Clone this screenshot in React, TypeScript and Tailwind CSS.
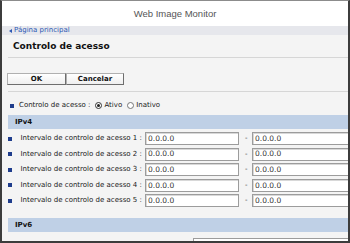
import React from 'react';

const ranges = [1, 2, 3, 4, 5];

function Bullet({ className = '' }: { className?: string }) {
  return <span className={`block w-[4px] h-[4px] bg-[#1f3d8c] shrink-0 ${className}`} />;
}

function IpInput({ width }: { width: string }) {
  return (
    <div
      className={`${width} h-[13px] shrink-0 bg-white border border-[#9c9c9c] shadow-[inset_1px_1px_0_#d8d8d8] flex items-center pl-[2px] text-[7.5px] text-[#333]`}
    >
      0.0.0.0
    </div>
  );
}

function SectionBar({ label }: { label: string }) {
  return (
    <div className="ml-[6px] h-[14px] bg-[#bfd0e6] flex items-center pl-[7px] font-bold text-[#111]">
      {label}
    </div>
  );
}

export default function App() {
  return (
    <div className="w-[350px] h-[243px] overflow-hidden bg-[#f4f4f4] border-x-2 border-b-2 border-t border-[#3c3c3c] border-t-[#8c8c8c] font-['DejaVu_Sans',sans-serif] text-[7px] text-[#1a1a1a] leading-none">
      {/* Header */}
      <div className="h-[25px] bg-white flex items-center justify-center font-['Liberation_Sans',Arial,sans-serif] text-[9.5px] text-[#555]">
        Web Image Monitor
      </div>

      {/* Breadcrumb */}
      <div className="h-[9px] bg-[#e6e7ec] bg-[radial-gradient(#cfd2dc_0.6px,transparent_0.7px)] bg-[size:2px_2px] flex items-center pl-[7px] text-[#2c58b4]">
        <svg width="3" height="4" viewBox="0 0 3 4" className="mr-[2px]">
          <path d="M3 0 L0 2 L3 4 Z" fill="#2c58b4" />
        </svg>
        Página principal
      </div>

      {/* Title */}
      <div className="h-[22px] flex items-center pl-[11px] font-bold text-[9px] text-[#111]">
        Controlo de acesso
      </div>
      <div className="ml-[6px] h-px bg-[#d6d6d6]" />

      {/* Buttons */}
      <div className="mt-[15px] ml-[5px] flex">
        <button className="w-[59px] h-[12px] bg-gradient-to-b from-white to-[#efefef] border border-[#b0b0b0] border-b-[#6e6e6e] border-r-[#6e6e6e] font-bold text-[7px] text-[#111] leading-none">
          OK
        </button>
        <button className="w-[58px] h-[12px] bg-gradient-to-b from-white to-[#efefef] border border-[#b0b0b0] border-b-[#6e6e6e] border-r-[#6e6e6e] font-bold text-[7px] text-[#111] leading-none">
          Cancelar
        </button>
      </div>
      <div className="mt-[6px] ml-[6px] h-px bg-[#d6d6d6]" />

      {/* Access control toggle */}
      <div className="h-[23px] pt-[4px] flex items-center">
        <Bullet className="ml-[8px]" />
        <span className="ml-[5px]">Controlo de acesso :</span>
        <span className="ml-[5px] w-[7px] h-[7px] rounded-full border border-[#333] bg-white flex items-center justify-center">
          <span className="w-[3px] h-[3px] rounded-full bg-[#222]" />
        </span>
        <span className="ml-[2px]">Ativo</span>
        <span className="ml-[5px] w-[7px] h-[7px] rounded-full border border-[#777] bg-white" />
        <span className="ml-[2px]">Inativo</span>
      </div>

      {/* IPv4 */}
      <SectionBar label="IPv4" />
      <div className="mt-[3px] flex flex-col gap-[2.6px]">
        {ranges.map((n) => (
          <div key={n} className="h-[13px] flex items-center">
            <Bullet className="ml-[6px]" />
            <span className="ml-[8.5px] w-[124.5px] shrink-0">Intervalo de controlo de acesso {n} :</span>
            <IpInput width="w-[94px]" />
            <span className="w-[13px] shrink-0 pl-[6px] text-[#333]">-</span>
            <IpInput width="w-[100px]" />
          </div>
        ))}
      </div>

      {/* IPv6 */}
      <div className="mt-[11px]">
        <SectionBar label="IPv6" />
      </div>
      <div className="mt-[6px] flex items-start">
        <span className="ml-[146px] mt-[3px] w-[7px] h-[7px] rounded-full border border-[#777] bg-white shrink-0" />
        <div className="ml-[38px] w-[160px] h-[13px] bg-white border border-[#9c9c9c] shrink-0" />
      </div>
    </div>
  );
}
